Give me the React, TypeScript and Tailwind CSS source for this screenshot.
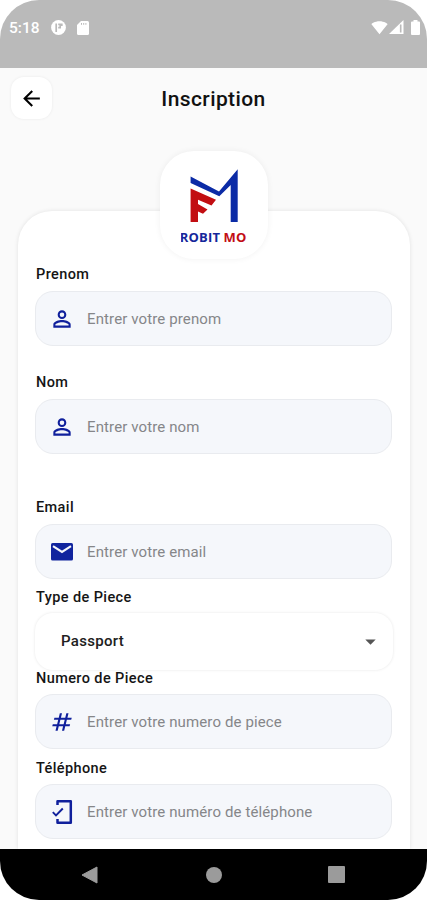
import type { ReactNode } from "react";
import {
  MdArrowBack,
  MdArrowDropDown,
  MdNumbers,
  MdPersonOutline,
  MdSignalWifi4Bar,
} from "react-icons/md";

function Label({ children }: { children: string }) {
  return (
    <div className="ml-[18px] h-4 whitespace-nowrap pt-px text-[14.5px] leading-4 font-medium tracking-[0.4px] text-[#151515]">
      {children}
    </div>
  );
}

function Field({ icon, placeholder }: { icon: ReactNode; placeholder: string }) {
  return (
    <div className="mr-[18px] ml-[17px] flex h-[55px] shrink-0 items-center rounded-[18px] border border-[#e9ebef] bg-[#f5f7fb]">
      <span className="flex w-[51px] shrink-0 justify-center text-[#10209c]">{icon}</span>
      <span className="whitespace-nowrap pt-px text-[15px] tracking-[0.12px] text-[#858689]">{placeholder}</span>
    </div>
  );
}

function MailIcon() {
  return (
    <svg width="22" height="18" viewBox="0 0 22 18">
      <rect width="22" height="17.5" rx="1.6" fill="#10249e" />
      <path d="M2 3.1 11 9l9-5.900" fill="none" stroke="#f5f7fb" strokeWidth="2.1" />
    </svg>
  );
}

function PhoneCheckIcon() {
  return (
    <svg width="22" height="26" viewBox="0 0 22 26" fill="none" stroke="currentColor">
      <path d="M6.500 6V2.200h13.300v21.600H6.500V20" strokeWidth="2.500" strokeLinejoin="round" />
      <path d="m1.800 13.200 3.200 3.300 6.800-7" strokeWidth="1.900" />
    </svg>
  );
}

function StatusBar() {
  return (
    <header className="flex h-[68px] shrink-0 items-start justify-between bg-[#bababa] pt-5 text-white">
      <div className="flex h-4 items-center pl-[9px]">
        <span className="w-[42px] text-[15.5px] leading-4 font-medium">5:18</span>
        <svg width="15" height="16" viewBox="0 0 15 16">
          <circle cx="7.5" cy="7.5" r="7.4" fill="white" />
          <path d="M5.2 3.5V12M7.2 4.3h2v3.4H7.2M10.8 3.5v2.5" stroke="#bababa" strokeWidth="1.7" fill="none" />
        </svg>
        <svg className="-mt-px ml-[11px]" width="12" height="14" viewBox="0 0 12 14">
          <path d="M4 0h6.5Q12 0 12 1.5v11Q12 14 10.5 14h-9Q0 14 0 12.5V4z" fill="white" />
          <path d="M4.5 2v1.8M6.7 2v1.8M8.900 2v1.8" stroke="#bababa" strokeWidth="1" />
        </svg>
      </div>
      <div className="-mt-px flex h-4 items-center pr-[3px]">
        <MdSignalWifi4Bar size={17} />
        <svg className="ml-[1px]" width="15" height="14" viewBox="0 0 15 14">
          <path d="M14.5 0v14H0z" fill="white" />
          <path d="M11.7 4.5v8" stroke="#bababa" strokeWidth="1.6" />
        </svg>
        <svg className="mr-[4px] ml-[7px]" width="9" height="15" viewBox="0 0 9 15">
          <path d="M2.5 0h4v1.5H8q1 0 1 1V14q0 1-1 1H1q-1 0-1-1V2.5q0-1 1-1h1.5z" fill="white" />
        </svg>
      </div>
    </header>
  );
}

function Logo() {
  return (
    <div className="flex h-[108px] w-[108px] flex-col items-center rounded-[34px] bg-white pt-[18px] shadow-[0_0_6px_rgba(0,0,0,0.06)]">
      <svg width="48" height="54" viewBox="190 169 48 54">
        <path d="M190.6 176.5 219 191.6 237.7 169.3V222H230.7V185L219.3 196.2 190.6 183z" fill="#0b2ba6" />
        <path d="M190.6 188.5 216 199.8 211.5 205.5 198 199.8V204L207.5 209.5 203 213.8 198 211.5V222H190.6z" fill="#c20e12" />
      </svg>
      <div className="mt-[6px] flex h-4 w-[66px] justify-end overflow-hidden whitespace-nowrap font-['Open_Sans',sans-serif] text-[13px] leading-4 font-bold tracking-[0.25px]">
        <span className="text-[#15279b]">ROBIT</span>
        <span className="ml-[3px] text-[#c20e16]">MO</span>
      </div>
    </div>
  );
}

export default function App() {
  return (
    <main className="h-[900px] w-[427px] bg-white font-['Roboto','Noto_Sans',sans-serif]">
      <div className="flex h-full flex-col overflow-hidden rounded-[39px] bg-[#fafafa]">
        <StatusBar />
        <div className="grid h-[83px] shrink-0 grid-cols-[42px_1fr_42px] items-start px-[10px] pt-[9px]">
          <button className="ml-px flex h-[42px] w-[41px] items-center justify-center rounded-[13px] bg-white pr-px text-black shadow-[0_0_3px_rgba(0,0,0,0.07)]">
            <MdArrowBack size={25} />
          </button>
          <h1 className="text-center text-[21px] leading-[44px] font-medium tracking-[0.4px] text-[#111]">Inscription</h1>
        </div>
        <div className="relative z-10 -mb-[48px] flex shrink-0 justify-center">
          <Logo />
        </div>
        <section className="mr-[17px] ml-[18px] flex min-h-0 flex-1 flex-col overflow-hidden rounded-t-[34px] bg-white pt-[55px] shadow-[0_0_4px_rgba(0,0,0,0.10)]">
          <Label>Prenom</Label>
          <div className="h-[9px] shrink-0" />
          <Field icon={<MdPersonOutline size={26} />} placeholder="Entrer votre prenom" />
          <div className="h-7 shrink-0" />
          <Label>Nom</Label>
          <div className="h-[9px] shrink-0" />
          <Field icon={<MdPersonOutline size={26} />} placeholder="Entrer votre nom" />
          <div className="h-[45px] shrink-0" />
          <Label>Email</Label>
          <div className="h-[9px] shrink-0" />
          <Field icon={<MailIcon />} placeholder="Entrer votre email" />
          <div className="h-[10px] shrink-0" />
          <Label>Type de Piece</Label>
          <div className="h-2 shrink-0" />
          <div className="mx-[17px] flex h-[57px] shrink-0 items-center justify-between rounded-[18px] bg-white pr-[10px] pl-[26px] shadow-[0_0_3px_rgba(0,0,0,0.10)]">
            <span className="text-[15px] font-medium tracking-[0.3px] text-[#202020]">Passport</span>
            <MdArrowDropDown size={25} color="#555" />
          </div>
          <Label>Numero de Piece</Label>
          <div className="h-2 shrink-0" />
          <Field icon={<MdNumbers size={26} />} placeholder="Entrer votre numero de piece" />
          <div className="h-[11px] shrink-0" />
          <Label>Téléphone</Label>
          <div className="h-2 shrink-0" />
          <Field icon={<PhoneCheckIcon />} placeholder="Entrer votre numéro de téléphone" />
        </section>
        <nav className="relative z-10 flex h-[51px] shrink-0 items-center bg-black pl-[81px]">
          <svg width="17" height="18" viewBox="0 0 17 18">
            <path d="M16 1v16L1 9z" fill="#9b9b9b" stroke="#9b9b9b" strokeLinejoin="round" />
          </svg>
          <span className="ml-[108px] h-4 w-4 rounded-full bg-[#9b9b9b]" />
          <span className="ml-[106px] h-[17px] w-[17px] rounded-[1px] bg-[#9b9b9b]" />
        </nav>
      </div>
    </main>
  );
}
